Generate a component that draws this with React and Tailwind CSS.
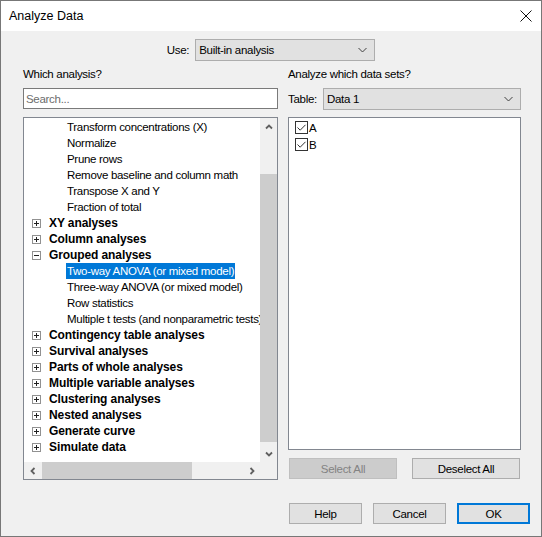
import React from "react";

const FONT = { fontFamily: '"Liberation Sans", Arial, sans-serif' };

const treeRows = [
  { kind: "child", label: "Transform concentrations (X)" },
  { kind: "child", label: "Normalize" },
  { kind: "child", label: "Prune rows" },
  { kind: "child", label: "Remove baseline and column math" },
  { kind: "child", label: "Transpose X and Y" },
  { kind: "child", label: "Fraction of total" },
  { kind: "group", label: "XY analyses", open: false },
  { kind: "group", label: "Column analyses", open: false },
  { kind: "group", label: "Grouped analyses", open: true },
  { kind: "child", label: "Two-way ANOVA (or mixed model)", selected: true },
  { kind: "child", label: "Three-way ANOVA (or mixed model)" },
  { kind: "child", label: "Row statistics" },
  { kind: "child", label: "Multiple t tests (and nonparametric tests)" },
  { kind: "group", label: "Contingency table analyses", open: false },
  { kind: "group", label: "Survival analyses", open: false },
  { kind: "group", label: "Parts of whole analyses", open: false },
  { kind: "group", label: "Multiple variable analyses", open: false },
  { kind: "group", label: "Clustering analyses", open: false },
  { kind: "group", label: "Nested analyses", open: false },
  { kind: "group", label: "Generate curve", open: false },
  { kind: "group", label: "Simulate data", open: false },
];

function Chevron({ dir = "down" }) {
  const paths = {
    down: "M1 1.5 L4 4.5 L7 1.5",
    up: "M1 4.5 L4 1.5 L7 4.5",
    left: "M4.5 1 L1.5 4 L4.5 7",
    right: "M1.5 1 L4.5 4 L1.5 7",
  };
  const horiz = dir === "left" || dir === "right";
  return (
    <svg
      width={horiz ? 6 : 8}
      height={horiz ? 8 : 6}
      viewBox={horiz ? "0 0 6 8" : "0 0 8 6"}
    >
      <path d={paths[dir]} fill="none" stroke="#606060" strokeWidth="1.8" />
    </svg>
  );
}

function ComboChevron() {
  return (
    <svg width="9" height="6" viewBox="0 0 9 6">
      <path d="M0.5 1 L4.5 5 L8.5 1" fill="none" stroke="#404040" strokeWidth="1" />
    </svg>
  );
}

function Expander({ open }) {
  return (
    <span className="flex h-[9px] w-[9px] items-center justify-center border border-[#919191] bg-white">
      <svg width="7" height="7" viewBox="0 0 7 7">
        <path d="M1 3.5 H6" stroke="#222" strokeWidth="1" />
        {!open && <path d="M3.5 1 V6" stroke="#222" strokeWidth="1" />}
      </svg>
    </span>
  );
}

function TreeRow({ row }) {
  if (row.kind === "group") {
    return (
      <div className="flex h-[16px] items-center whitespace-nowrap">
        <span className="ml-[8px]">
          <Expander open={row.open} />
        </span>
        <span className="ml-[8px] text-[12px] font-bold tracking-[-0.1px] text-black">
          {row.label}
        </span>
      </div>
    );
  }
  return (
    <div className="flex h-[16px] items-center whitespace-nowrap">
      <span
        className={
          "ml-[42px] flex h-[16px] items-center px-[1px] " +
          (row.selected ? "bg-[#0078d7] text-white" : "text-black")
        }
      >
        {row.label}
      </span>
    </div>
  );
}

function Checkbox({ label }) {
  return (
    <div className="flex h-[17px] items-center">
      <span className="ml-[6px] flex h-[13px] w-[13px] items-center justify-center border border-[#333] bg-white">
        <svg width="11" height="11" viewBox="0 0 11 11">
          <path d="M1.5 5.5 L4.2 8.2 L9.5 2.8" fill="none" stroke="#333" strokeWidth="1" />
        </svg>
      </span>
      <span className="ml-[1px] text-black">{label}</span>
    </div>
  );
}

function Button({ children, className = "" }) {
  return (
    <button
      className={
        "flex items-center justify-center border border-[#adadad] bg-[#e1e1e1] text-black " +
        className
      }
    >
      {children}
    </button>
  );
}

export default function App() {
  return (
    <div
      className="flex h-[537px] w-[542px] flex-col border border-[#777] bg-[#f0f0f0] text-[11.5px] leading-[16px] tracking-[-0.3px]"
      style={FONT}
    >
      {/* title bar */}
      <div className="flex h-[30px] shrink-0 items-center justify-between bg-white pl-[8px] pr-[8px]">
        <span className="text-[12.5px] tracking-normal text-black">Analyze Data</span>
        <svg width="12" height="12" viewBox="0 0 12 12" className="mr-[1px]">
          <path d="M0.5 0.5 L11.5 11.5 M11.5 0.5 L0.5 11.5" stroke="#111" strokeWidth="1" />
        </svg>
      </div>

      {/* dialog body */}
      <div className="flex flex-1 flex-col">
        <div className="mt-[8px] flex h-[22px] items-center justify-center gap-[6px]">
          <span className="text-black">Use:</span>
          <div className="flex h-[22px] w-[180px] items-center justify-between border border-[#adadad] bg-[#e1e1e1] pl-[3px] pr-[7px]">
            <span className="text-black">Built-in analysis</span>
            <ComboChevron />
          </div>
        </div>

        <div className="mt-[5px] flex pl-[22px]">
          {/* left column */}
          <div className="flex w-[255px] flex-col">
            <div className="h-[16px] text-black">Which analysis?</div>
            <div className="mt-[6px] flex h-[21px] items-center border border-[#7a7a7a] bg-white pl-[2px]">
              <span className="text-[#6d6d6d]">Search...</span>
            </div>
            <div className="mt-[8px] flex h-[363px] flex-col border border-[#828790] bg-white">
              <div className="flex min-h-0 flex-1">
                <div className="min-w-0 flex-1 overflow-hidden pt-[1px]">
                  {treeRows.map((r, i) => (
                    <TreeRow key={i} row={r} />
                  ))}
                </div>
                {/* vertical scrollbar */}
                <div className="flex w-[17px] flex-col bg-[#f0f0f0]">
                  <div className="flex h-[17px] items-center justify-center">
                    <Chevron dir="up" />
                  </div>
                  <div className="flex flex-1 flex-col">
                    <div className="h-[39px]" />
                    <div className="h-[268px] bg-[#cdcdcd]" />
                  </div>
                  <div className="flex h-[17px] items-center justify-center">
                    <Chevron dir="down" />
                  </div>
                </div>
              </div>
              {/* horizontal scrollbar */}
              <div className="flex h-[17px] bg-[#f0f0f0]">
                <div className="flex flex-1 items-center">
                  <div className="flex h-[17px] w-[17px] items-center justify-center">
                    <Chevron dir="left" />
                  </div>
                  <div className="ml-[1px] h-[17px] w-[150px] bg-[#cdcdcd]" />
                  <div className="flex-1" />
                  <div className="flex h-[17px] w-[17px] items-center justify-center">
                    <Chevron dir="right" />
                  </div>
                </div>
                <div className="w-[17px]" />
              </div>
            </div>
          </div>

          {/* right column */}
          <div className="ml-[10px] flex w-[233px] flex-col">
            <div className="h-[16px] text-black">Analyze which data sets?</div>
            <div className="mt-[6px] flex h-[22px] items-center justify-between">
              <span className="text-black">Table:</span>
              <div className="flex h-[22px] w-[198px] items-center justify-between border border-[#adadad] bg-[#e1e1e1] pl-[3px] pr-[7px]">
                <span className="text-black">Data 1</span>
                <ComboChevron />
              </div>
            </div>
            <div className="mt-[7px] flex h-[333px] flex-col border border-[#828790] bg-white pt-[1px]">
              <Checkbox label="A" />
              <Checkbox label="B" />
            </div>
            <div className="mt-[8px] flex h-[21px] gap-[15px] pl-[1px]">
              <div className="flex h-[21px] w-[108px] items-center justify-center border border-[#bfbfbf] bg-[#cccccc] text-[#838383]">
                Select All
              </div>
              <Button className="h-[21px] w-[108px]">Deselect All</Button>
            </div>
          </div>
        </div>

        {/* dialog buttons */}
        <div className="mt-auto flex justify-end gap-[11px] pb-[12px] pr-[11px]">
          <Button className="h-[21px] w-[73px]">Help</Button>
          <Button className="h-[21px] w-[73px]">Cancel</Button>
          <button className="flex h-[21px] w-[73px] items-center justify-center border-2 border-[#0078d7] bg-[#e1e1e1] text-black">
            OK
          </button>
        </div>
      </div>
    </div>
  );
}
